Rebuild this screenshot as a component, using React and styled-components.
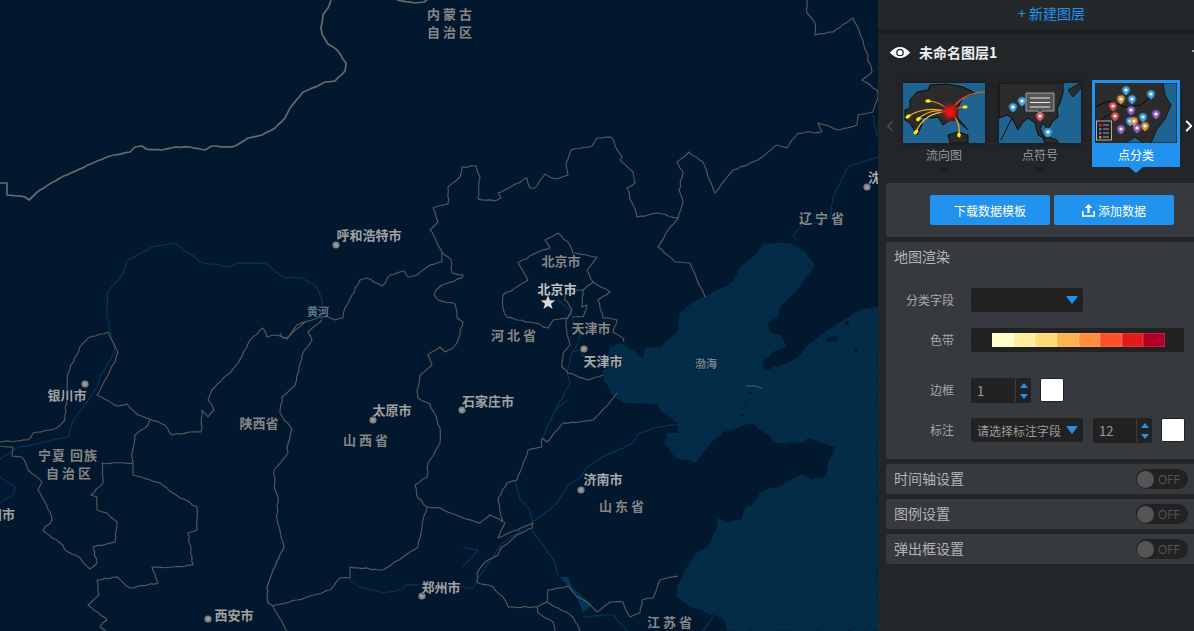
import React from 'react';
import styled, { createGlobalStyle } from 'styled-components';
import { ChevronLeft, ChevronRight } from 'lucide-react';

const FONT = '"Noto Sans CJK SC", "Noto Sans", "Liberation Sans", sans-serif';
const BLUE = '#2193ee';

const GlobalStyle = createGlobalStyle`
  html, body { margin: 0; padding: 0; background: #01182f; overflow: hidden; }
  body { font-family: ${FONT}; }
`;

const Page = styled.div`
  display: flex;
  width: 1194px;
  height: 631px;
  overflow: hidden;
`;

/* ---------- map ---------- */

const MapArea = styled.div`
  width: 878px;
  height: 631px;
  flex: none;
  background: #01182f;
`;

const MapSvg = styled.svg`
  display: block;
`;

const Border = styled.polyline`
  fill: none;
  stroke: ${(p) => (p.$heavy ? '#6a6a6a' : '#5a5a5a')};
  stroke-width: ${(p) => (p.$heavy ? 1.7 : 1.1)};
  stroke-linejoin: round;
`;

const River = styled.polyline`
  fill: none;
  stroke: #04365a;
  stroke-width: 1.2;
  stroke-linejoin: round;
`;

const MapLabel = styled.text`
  font-family: ${FONT};
  font-size: ${(p) => (p.$small ? 11 : 13)}px;
  font-weight: 700;
  fill: ${(p) => p.$color || '#868686'};
  letter-spacing: ${(p) => p.$spaced || 0}px;
  text-anchor: ${(p) => p.$anchor || 'middle'};
  paint-order: stroke;
  stroke: rgba(1, 24, 47, 0.7);
  stroke-width: 1.5px;
`;

// breaks a hand traced line into short wobbling steps so it reads like a real boundary
function roughen(points, amount) {
  let seed = 7;
  const rnd = () => {
    seed = (seed * 16807) % 2147483647;
    return (seed % 1000) / 500 - 1;
  };
  const pts = points.split(' ').map((p) => p.split(',').map(Number));
  const out = [];
  pts.forEach(([x, y], i) => {
    out.push(`${x},${y}`);
    if (i === pts.length - 1) return;
    const [nx, ny] = pts[i + 1];
    const len = Math.hypot(nx - x, ny - y);
    const steps = Math.floor(len / 4);
    for (let s = 1; s < steps; s++) {
      const t = s / steps;
      const px = x + (nx - x) * t + rnd() * amount;
      const py = y + (ny - y) * t + rnd() * amount;
      out.push(`${px.toFixed(1)},${py.toFixed(1)}`);
    }
  });
  return out.join(' ');
}

const SEA =
  '603,370 610,347 620,343 628,347 638,355 643,358 645,348 660,347 678,330 680,313 693,302 733,282 740,267 757,253 763,243 790,243 803,250 815,265 800,287 780,307 777,318 768,323 770,332 783,337 787,347 777,350 762,362 765,370 787,363 798,357 808,345 827,330 860,310 878,307 878,631 727,631 723,618 693,608 677,597 677,587 685,570 697,552 707,547 717,528 717,518 727,523 742,519 745,507 752,505 760,492 783,485 802,474 812,480 827,475 828,463 835,447 808,438 803,443 777,443 763,432 752,423 723,432 705,450 697,462 675,458 664,443 667,433 678,433 678,423 663,413 657,404 623,403 610,393 603,377';

const HEAVY = [
  '0,183 7,183 7,195 25,197 29,200 40,190 60,178 95,162 110,156 130,152 135,147 142,146 146,149 162,150 175,147 190,147 205,150 212,146 232,147 237,145 248,138 262,135 275,128 285,118 290,108 303,92 318,86 325,82 335,81 345,71 346,63 337,50 328,44 322,34 321,28 323,15 328,8 331,0',
  '397,0 415,3 424,2 427,0',
];

const BORDERS = [
  // shaanxi / shanxi
  '322,320 308,332 312,340 302,355 295,385 282,397 280,413 292,430 287,447 288,453 274,470 275,490 278,497 277,520 284,547 273,570 267,587 268,603 273,606 287,631',
  // ningxia / inner mongolia
  '305,322 293,332 287,339 277,335 267,337 263,328 250,340 238,363 227,375 212,390 208,400 214,410 208,417 202,410 201,432 190,432 172,435 165,425 150,419 138,415 127,404 117,406 97,395 115,362 118,352 110,337 108,332 88,338 80,347 68,373 65,420 57,428 33,433 28,440 0,442',
  '0,446 13,447 12,456 22,457 28,470 42,482 38,490 50,512 52,520 43,530 60,543 68,552 80,558 90,569 97,563 93,547 115,542 117,522 107,513 97,510 97,497 91,495 103,483 102,463 133,463',
  '150,419 148,425 135,435 132,453 133,475 160,483 173,493 197,507 197,530 188,533 193,565 173,567 152,567 158,583 130,588 117,577 97,580 99,595 88,605 107,620 100,627 106,631',
  // shanxi east
  '434,295 438,300 455,304 457,318 463,322 457,343 453,348 445,352 440,347 428,355 432,365 420,375 417,390 418,398 430,404 437,420 440,428 440,443 428,463 427,477 415,485 418,498 427,507 440,508 463,518 480,523 490,515 503,522 498,498 507,483 517,480 528,450 542,447 542,438 547,442 563,423 593,420 610,402 617,393',
  '427,507 423,520 418,547 403,557 383,570 350,567 350,578 340,578 330,590 297,600 273,606',
  // inner mongolia / hebei
  '280,333 283,338 288,337 297,325 308,321 322,317 328,317 335,320 343,318 345,308 360,280 367,278 382,286 390,275 404,271 408,277 417,275 430,265 442,262 442,252 451,260 452,273 463,275 462,278 442,285 436,290 434,295',
  '442,252 430,230 438,222 433,208 448,204 448,187 460,177 462,167 476,166 480,177 478,199 495,201 501,198 498,193 527,178 530,188 535,188 545,174 555,179 568,175 566,163 571,150 592,146 597,138 611,137 622,157 620,160 633,172 635,183 627,188 632,203 637,217 657,213 678,218 683,202 679,190 683,172 677,162 689,152 703,162 715,193 733,170 758,160 777,145 787,148 798,133 822,132 818,123 840,130 857,125 858,115 873,112 878,98',
  '807,0 807,13 815,23 815,35 833,32 853,18 863,40 872,72 862,80 877,90 878,98',
  '678,218 668,230 658,247 675,262 690,263 697,280 705,297',
  // beijing
  '558,233 545,240 550,248 538,252 518,263 528,280 503,295 503,308 507,317 517,320 535,323 548,328 553,320 568,318 572,310 565,300 565,295 577,290 583,290 593,282 587,270 597,257 573,253 570,245 558,233',
  // tianjin
  '593,282 610,292 598,300 603,318 617,320 613,332 623,338 624,342',
  '572,310 566,320 567,335 570,345 563,353 562,367 568,373 587,380 603,375',
  '583,290 582,307 587,305 583,317 573,317',
  // henan / shandong / jiangsu
  '505,522 498,538 533,523 532,528 517,535 502,547 498,555 485,562 477,573 477,582 493,587 503,597 508,607 537,607 547,602 548,590 568,586 577,597 587,602 597,612 610,602 623,602 630,617 640,613 642,600 653,598 660,580 678,576',
  '537,607 538,613 553,622 555,631',
  '547,602 573,617 580,631',
];

const RIVERS = [
  '107,320 107,293 122,275 128,260 152,247 173,243 192,255 200,262 230,267 237,263 265,263 283,277 302,278 317,287 322,300 322,320',
  '108,320 112,340 115,352 100,377 97,387 83,407 72,423 68,437 43,442 17,448 0,459',
  '0,477 15,487 13,495 0,503',
  '291,433 287,447',
  '284,547 273,570 267,587 268,603',
  '350,580 360,587 383,593 402,590 405,585 420,585 463,587 473,588 477,580 502,543 507,540 533,522 557,503 568,485 580,478 587,467 603,457 633,443 637,435 653,428 680,424',
  '463,547 478,550 463,567',
  '532,530 555,563 558,577',
  '583,617 607,615 613,615 627,631',
  '515,480 520,500 530,510 532,522',
  '567,400 555,410 543,437',
  '558,300 570,310 573,322 580,335 578,343 572,352 567,373 570,383 555,410',
  '572,352 580,350 590,367 600,368',
  '878,157 848,167 833,197 830,217 817,223 803,225 793,235 797,240',
  '873,115 877,137',
  '713,617 703,631',
];

const DOTS = [
  [336, 245], [584, 349], [85, 384], [373, 420], [462, 410], [581, 490], [422, 596], [208, 619], [867, 187],
];

const LABELS = [
  { x: 451, y: 19, text: '内蒙古', spaced: 3 },
  { x: 451, y: 37, text: '自治区', spaced: 3 },
  { x: 369, y: 240, text: '呼和浩特市', color: '#a0a0a0' },
  { x: 561, y: 266, text: '北京市' },
  { x: 557, y: 294, text: '北京市', color: '#c4c4c4' },
  { x: 515, y: 340, text: '河北省', spaced: 3 },
  { x: 591, y: 333, text: '天津市' },
  { x: 603, y: 366, text: '天津市', color: '#a8a8a8' },
  { x: 706, y: 368, text: '渤海', small: true, color: '#70808c' },
  { x: 318, y: 316, text: '黄河', small: true, color: '#5f7a90' },
  { x: 823, y: 223, text: '辽宁省', spaced: 3 },
  { x: 868, y: 182, text: '沈阳市', color: '#a8a8a8', anchor: 'start' },
  { x: 67, y: 400, text: '银川市', color: '#a0a0a0' },
  { x: 259, y: 428, text: '陕西省' },
  { x: 392, y: 415, text: '太原市', color: '#a0a0a0' },
  { x: 367, y: 445, text: '山西省', spaced: 3 },
  { x: 488, y: 406, text: '石家庄市', color: '#a0a0a0' },
  { x: 68, y: 460, text: '宁夏 回族', spaced: 1 },
  { x: 70, y: 478, text: '自治区', spaced: 3 },
  { x: 15, y: 519, text: '兰州市', color: '#a0a0a0', anchor: 'end' },
  { x: 603, y: 484, text: '济南市', color: '#a8a8a8' },
  { x: 623, y: 511, text: '山东省', spaced: 3 },
  { x: 441, y: 592, text: '郑州市', color: '#a0a0a0' },
  { x: 234, y: 620, text: '西安市', color: '#a0a0a0' },
  { x: 671, y: 627, text: '江苏省', spaced: 3 },
];

function ChinaMap() {
  return (
    <MapArea>
      <MapSvg width="878" height="631" viewBox="0 0 878 631">
        <polygon points={roughen(SEA, 0.8)} fill="#022c47" />
        <polygon points="560,577 568,577 572,587 592,605 583,613 577,597" fill="#04365a" />
        <g fill="#01182f">
          <circle cx="847" cy="323" r="2" />
          <circle cx="856" cy="351" r="2" />
          <circle cx="750" cy="393" r="1.5" />
          <circle cx="745" cy="403" r="1" />
          <circle cx="742" cy="415" r="1.5" />
          <polygon points="826,338 836,336 838,341 828,342" />
        </g>
        {RIVERS.map((d, i) => <River key={i} points={roughen(d, 0.6)} />)}
        {HEAVY.map((d, i) => <Border key={i} points={roughen(d, 0.35)} $heavy />)}
        {BORDERS.map((d, i) => <Border key={i} points={roughen(d, 0.8)} />)}
        <Border points="746,386 755,386 762,388" />
        {DOTS.map(([x, y], i) => (
          <g key={i}>
            <circle cx={x} cy={y} r="3.6" fill="#7f7f7f" />
            <circle cx={x} cy={y} r="1.8" fill="#a0a0a0" />
          </g>
        ))}
        <polygon
          points="548,295 549.9,300.2 555.4,300.4 551,303.8 552.6,309 548,306 543.4,309 545,303.8 540.6,300.4 546.1,300.2"
          fill="#d8d8d8"
        />
        {LABELS.map((l, i) => (
          <MapLabel key={i} x={l.x} y={l.y} $small={l.small} $color={l.color} $spaced={l.spaced} $anchor={l.anchor}>
            {l.text}
          </MapLabel>
        ))}
      </MapSvg>
    </MapArea>
  );
}

/* ---------- thumbnails ---------- */

const Pin = ({ x, y, color }) => (
  <g>
    <circle cx={x} cy={y} r="4.6" fill={color} opacity="0.35" />
    <path d={`M${x - 3.6} ${y} a3.6 3.6 0 1 1 7.2 0 q-.6 2.8 -3.6 5.4 q-3 -2.6 -3.6 -5.4z`} fill={color} />
    <circle cx={x} cy={y} r="1.6" fill="#fff" />
  </g>
);

const FlowThumb = () => (
  <svg width="82" height="60" viewBox="0 0 82 60">
    <defs>
      <radialGradient id="glow">
        <stop offset="0" stopColor="#ff0a0a" />
        <stop offset="0.35" stopColor="#e01414" />
        <stop offset="0.6" stopColor="#8c1a1a" stopOpacity="0.8" />
        <stop offset="1" stopColor="#8c1a1a" stopOpacity="0" />
      </radialGradient>
    </defs>
    <rect width="82" height="60" fill="#1f6391" />
    <path
      d="M7 17 L14 9 L25 7 L27 2 L44 1 L60 4 L72 10 L60 15 L57 20 L55 25 L54 34 L65 47 L54 37 L47 37 L40 42 L35 34 L29 35 L17 34 L19 42 L14 52 L7 40 L2 37 L2 27 L7 25 Z"
      fill="#2b2b2b"
      stroke="#0c0c0c"
      strokeWidth="1"
    />
    <path d="M45 52 L55 49 L65 52 L65 60 L47 60 Z" fill="#2b2b2b" stroke="#0c0c0c" strokeWidth="1" />
    <g fill="none" strokeWidth="1.2" strokeLinecap="round">
      <path d="M24 18 Q38 18 47 29" stroke="#e9951c" />
      <path d="M4 34 Q22 22 47 29" stroke="#f0a828" />
      <path d="M15 36 Q28 24 47 29" stroke="#f0a828" />
      <path d="M13 49 Q22 28 47 29" stroke="#f2bd3a" />
      <path d="M62 24 Q54 24 47 29" stroke="#e9851c" />
      <path d="M56 52 Q58 38 47 29" stroke="#f0a828" />
      <path d="M82 9 Q60 9 47 29" stroke="#e8651c" />
      <path d="M47 29 Q52 20 60 15" stroke="#e8451c" />
    </g>
    <circle cx="47" cy="29" r="11" fill="url(#glow)" />
    <g fill="#ffee00">
      <ellipse cx="25" cy="18" rx="2.8" ry="1.8" />
      <ellipse cx="5" cy="33.500" rx="2.8" ry="1.8" transform="rotate(-30 5 33.5)" />
      <ellipse cx="15.500" cy="36" rx="2.8" ry="1.8" transform="rotate(-35 15.5 36)" />
      <ellipse cx="13" cy="49" rx="2.8" ry="1.8" transform="rotate(-45 13 49)" />
      <ellipse cx="62" cy="24" rx="2.6" ry="1.8" />
      <ellipse cx="56" cy="52" rx="1.8" ry="2.6" />
    </g>
  </svg>
);

const SymbolThumb = () => (
  <svg width="82" height="60" viewBox="0 0 82 60">
    <rect width="82" height="60" fill="#1f6391" />
    <path
      d="M0 0 H64 L64 10 L61 20 L58 25 L59 34 L53 39 L49 47 L44 40 L41 45 L44 52 L48 57 L39 52 L36 40 L29 35 L23 40 L19 47 L13 35 L8 32 L0 35 Z"
      fill="#2b2b2b"
      stroke="#0c0c0c"
      strokeWidth="1"
    />
    <path d="M69 7 L81 0 L82 0 L82 5 L74 14 Z" fill="#2b2b2b" stroke="#0c0c0c" strokeWidth="0.8" />
    <path d="M44 56 L50 54 L58 57 L60 60 L46 60 Z" fill="#2b2b2b" stroke="#0c0c0c" strokeWidth="0.8" />
    <path d="M13 35 L8 45 L2 57" fill="none" stroke="#0c0c0c" strokeWidth="1" />
    <Pin x={14} y={24} color="#45a6e6" />
    <Pin x={23} y={18} color="#45a6e6" />
    <Pin x={49} y={49} color="#45a6e6" />
    <Pin x={41} y={33} color="#e05a5a" />
    <path d="M27 10 H55 V28 H44 L41 30 L38 28 H27 Z" fill="#555" stroke="#aaa" strokeWidth="0.9" />
    <path d="M31 15 H51 M31 19.5 H51 M31 24 H51" stroke="#fff" strokeWidth="0.9" />
  </svg>
);

const CategoryThumb = () => (
  <svg width="82" height="60" viewBox="0 0 82 60">
    <rect width="82" height="60" fill="#2b2b2b" />
    <path d="M68 0 L82 0 L82 60 L56 60 L62 46 L70 36 L76 22 L70 12 Z" fill="#1f6391" stroke="#0c0c0c" strokeWidth="0.8" />
    <path d="M30 60 L40 54 L48 60 Z" fill="#1f6391" stroke="#0c0c0c" strokeWidth="0.8" />
    <path d="M0 24 L14 18 L30 24 L46 22 L60 10 M0 42 L10 34 L18 30" fill="none" stroke="#000" strokeWidth="0.8" />
    <Pin x={31} y={7} color="#3f9fe0" />
    <Pin x={56} y={11} color="#3f9fe0" />
    <Pin x={37} y={16} color="#3f9fe0" />
    <Pin x={26} y={16} color="#d8913f" />
    <Pin x={18} y={23} color="#d85050" />
    <Pin x={36} y={27} color="#9160c8" />
    <Pin x={20} y={33} color="#d85050" />
    <Pin x={61} y={31} color="#9160c8" />
    <Pin x={48} y={34} color="#3f9fe0" />
    <Pin x={35} y={38} color="#3f9fe0" />
    <Pin x={39} y={38} color="#d8913f" />
    <Pin x={50} y={43} color="#d8913f" />
    <Pin x={42} y={45} color="#9160c8" />
    <Pin x={26} y={46} color="#9160c8" />
    <rect x="1.5" y="38" width="15" height="19" fill="#222" stroke="#ccc" strokeWidth="0.8" />
    <rect x="4" y="41" width="2.4" height="2.4" fill="#b33" />
    <rect x="4" y="45" width="2.4" height="2.4" fill="#38c" />
    <rect x="4" y="49" width="2.4" height="2.4" fill="#85c" />
    <rect x="4" y="53" width="2.4" height="2.4" fill="#c83" />
    <path d="M8 42 H14 M8 46 H14 M8 50 H14 M8 54 H14" stroke="#ddd" strokeWidth="0.7" />
  </svg>
);

/* ---------- side panel ---------- */

const Panel = styled.aside`
  width: 316px;
  height: 631px;
  flex: none;
  display: flex;
  flex-direction: column;
  background: #222629;
  box-sizing: border-box;
  overflow: hidden;
  position: relative;
`;

const TopBar = styled.div`
  height: 29px;
  line-height: 27px;
  padding-left: 140px;
  color: ${BLUE};
  font-size: 14px;
  background: #24282b;
  border-bottom: 5px solid #1b1d1f;
  flex: none;
`;

const LayerHeader = styled.div`
  display: flex;
  align-items: center;
  gap: 8px;
  height: 20px;
  margin-top: 8px;
  padding-left: 11px;
  color: #eeeeee;
  font-size: 14px;
  font-weight: 700;
`;

const CornerMark = styled.span`
  position: absolute;
  right: 0;
  top: 50px;
  width: 2px;
  height: 2px;
  background: #999;
`;

const ThumbRow = styled.div`
  display: flex;
  align-items: flex-start;
  gap: 8px;
  margin-top: 18px;
  padding-left: 22px;
  height: 103px;
  position: relative;
  flex: none;
`;

const ThumbItem = styled.div`
  width: 88px;
  height: 87px;
  box-sizing: border-box;
  border: 3px solid ${(p) => (p.$active ? BLUE : 'transparent')};
  background: ${(p) => (p.$active ? BLUE : 'transparent')};
  flex: none;
  position: relative;
  svg { display: block; box-shadow: ${(p) => (p.$active ? 'none' : '0 0 5px #16181a')}; }
  &::after {
    content: '';
    position: absolute;
    left: 50%;
    bottom: -9px;
    margin-left: -7px;
    border-left: 7px solid transparent;
    border-right: 7px solid transparent;
    border-top: 6px solid ${(p) => (p.$active ? BLUE : '#1e2123')};
  }
`;

const ThumbLabel = styled.div`
  height: 21px;
  line-height: 23px;
  text-align: center;
  font-size: 12px;
  color: ${(p) => (p.$active ? '#ffffff' : '#9a9a9a')};
`;

const Arrow = styled.span`
  position: absolute;
  top: 37px;
  ${(p) => (p.$side === 'left' ? 'left: 3px;' : 'right: -4px;')}
  color: ${(p) => (p.$side === 'left' ? '#4d5154' : '#ffffff')};
  display: flex;
`;

const Section = styled.section`
  margin: 0 0 5px 8px;
  background: #363a3e;
  border-radius: 3px 0 0 3px;
  flex: none;
`;

const ActionBar = styled(Section)`
  height: 54px;
  display: flex;
  align-items: flex-start;
  gap: 4px;
  padding: 12px 0 0 44px;
  box-sizing: border-box;
`;

const ActionButton = styled.button`
  width: 120px;
  height: 30px;
  border: 0;
  border-radius: 2px;
  background: ${BLUE};
  color: #fff;
  font-family: ${FONT};
  font-size: 12px;
  display: flex;
  align-items: center;
  justify-content: center;
  gap: 3px;
  padding: 0;
`;

const RenderSection = styled(Section)`
  height: 217px;
  box-sizing: border-box;
  padding: 5px 0 0 8px;
`;

const Heading = styled.div`
  color: #b4b4b4;
  font-size: 14px;
  line-height: 19px;
`;

const FormRow = styled.div`
  display: flex;
  align-items: center;
  gap: 10px;
  height: 24px;
  margin-top: ${(p) => p.$top}px;
`;

const FieldLabel = styled.label`
  width: 60px;
  margin: 0 7px 2px 0;
  text-align: right;
  color: #a8a8a8;
  font-size: 12px;
  flex: none;
`;

const Dropdown = styled.div`
  width: 112px;
  height: 24px;
  box-sizing: border-box;
  padding-left: 6px;
  background: #222222;
  border-radius: 2px;
  color: #9c9c9c;
  font-size: 12px;
  line-height: 25px;
  position: relative;
  white-space: nowrap;
  &::after {
    content: '';
    position: absolute;
    right: 5px;
    top: 8px;
    border-left: 6.5px solid transparent;
    border-right: 6.5px solid transparent;
    border-top: 8px solid ${BLUE};
  }
`;

const RampBox = styled.div`
  width: 213px;
  height: 24px;
  box-sizing: border-box;
  padding: 5px 0 0 21px;
  background: #222222;
  border-radius: 2px;
`;

const Ramp = styled.div`
  display: flex;
  width: 173px;
  height: 14px;
`;

const RampCell = styled.div`
  flex: 1;
  box-shadow: inset 0 0 0 0.5px rgba(255, 255, 255, 0.25);
  background: ${(p) => p.$color};
`;

const Spinner = styled.div`
  width: ${(p) => p.$width}px;
  height: 25px;
  box-sizing: border-box;
  padding-left: 6px;
  background: #222222;
  border-radius: 2px;
  color: #9c9c9c;
  font-size: 13px;
  line-height: 25px;
  display: flex;
  justify-content: space-between;
`;

const SpinButtons = styled.div`
  width: 16px;
  height: 23px;
  margin-top: 1px;
  border-left: 1px solid #3a3a3a;
  display: flex;
  flex-direction: column;
  align-items: center;
  justify-content: space-between;
  padding: 4px 0 3px;
  box-sizing: border-box;
`;

const SpinUp = styled.span`
  border-left: 4px solid transparent;
  border-right: 4px solid transparent;
  border-bottom: 5px solid ${BLUE};
`;

const SpinDown = styled.span`
  border-left: 4px solid transparent;
  border-right: 4px solid transparent;
  border-top: 5px solid ${BLUE};
`;

const Swatch = styled.div`
  width: 24px;
  height: 24px;
  margin-left: -1px;
  box-sizing: border-box;
  background: #fff;
  border: 1px solid #222;
  border-radius: 2px;
  flex: none;
`;

const CollapsedRow = styled(Section)`
  height: 30px;
  display: flex;
  align-items: center;
  justify-content: space-between;
  padding: 0 6px 0 8px;
  color: #b4b4b4;
  font-size: 14px;
`;

const RowTitle = styled.span`
  margin-bottom: 2px;
`;

const Toggle = styled.div`
  width: 52px;
  height: 20px;
  border-radius: 10px;
  background: #222222;
  display: flex;
  align-items: center;
  gap: 4px;
  box-sizing: border-box;
  padding-left: 1px;
  color: #555555;
  font-size: 12px;
  font-family: "Open Sans", "Liberation Sans", sans-serif;
`;

const Knob = styled.span`
  width: 17px;
  height: 17px;
  border-radius: 50%;
  background: #555555;
`;

const EyeIcon = () => (
  <svg width="22" height="11" viewBox="0 0 22 12">
    <path d="M0 6 C4 1.5 7.5 0 11 0 C14.5 0 18 1.5 22 6 C18 10.5 14.5 12 11 12 C7.5 12 4 10.5 0 6 Z" fill="#fff" />
    <circle cx="11" cy="6" r="4.2" fill="#222629" />
    <circle cx="11" cy="6" r="2.8" fill="#fff" />
  </svg>
);

const UploadIcon = () => (
  <svg width="13" height="13" viewBox="0 0 13 13">
    <path d="M6.5 0 L10.4 4 H7.6 V9 H5.4 V4 H2.6 Z" fill="#fff" />
    <path d="M0.8 7 V12 H12.2 V7" fill="none" stroke="#fff" strokeWidth="1.6" />
  </svg>
);

const RAMP = ['#ffffcc', '#ffeda0', '#fed976', '#feb24c', '#fd8d3c', '#fc4e2a', '#e31a1c', '#b10026'];

const THUMBS = [
  { name: '流向图', Art: FlowThumb },
  { name: '点符号', Art: SymbolThumb },
  { name: '点分类', Art: CategoryThumb, active: true },
];

const OPTIONS = ['时间轴设置', '图例设置', '弹出框设置'];

function SidePanel() {
  return (
    <Panel>
      <TopBar>+ 新建图层</TopBar>
      <LayerHeader>
        <EyeIcon />
        未命名图层1
      </LayerHeader>
      <CornerMark />
      <ThumbRow>
        <Arrow $side="left"><ChevronLeft size={18} strokeWidth={2} /></Arrow>
        {THUMBS.map(({ name, Art, active }) => (
          <ThumbItem key={name} $active={active}>
            <Art />
            <ThumbLabel $active={active}>{name}</ThumbLabel>
          </ThumbItem>
        ))}
        <Arrow $side="right"><ChevronRight size={18} strokeWidth={2.5} /></Arrow>
      </ThumbRow>
      <ActionBar>
        <ActionButton>下载数据模板</ActionButton>
        <ActionButton><UploadIcon />添加数据</ActionButton>
      </ActionBar>
      <RenderSection>
        <Heading>地图渲染</Heading>
        <FormRow $top={22}>
          <FieldLabel>分类字段</FieldLabel>
          <Dropdown />
        </FormRow>
        <FormRow $top={16}>
          <FieldLabel>色带</FieldLabel>
          <RampBox>
            <Ramp>
              {RAMP.map((c) => <RampCell key={c} $color={c} />)}
            </Ramp>
          </RampBox>
        </FormRow>
        <FormRow $top={26}>
          <FieldLabel>边框</FieldLabel>
          <Spinner $width={60}>1<SpinButtons><SpinUp /><SpinDown /></SpinButtons></Spinner>
          <Swatch />
        </FormRow>
        <FormRow $top={16}>
          <FieldLabel>标注</FieldLabel>
          <Dropdown>请选择标注字段</Dropdown>
          <Spinner $width={59}>12<SpinButtons><SpinUp /><SpinDown /></SpinButtons></Spinner>
          <Swatch />
        </FormRow>
      </RenderSection>
      {OPTIONS.map((name) => (
        <CollapsedRow key={name}>
          <RowTitle>{name}</RowTitle>
          <Toggle><Knob />OFF</Toggle>
        </CollapsedRow>
      ))}
    </Panel>
  );
}

export default function App() {
  return (
    <Page>
      <GlobalStyle />
      <ChinaMap />
      <SidePanel />
    </Page>
  );
}
